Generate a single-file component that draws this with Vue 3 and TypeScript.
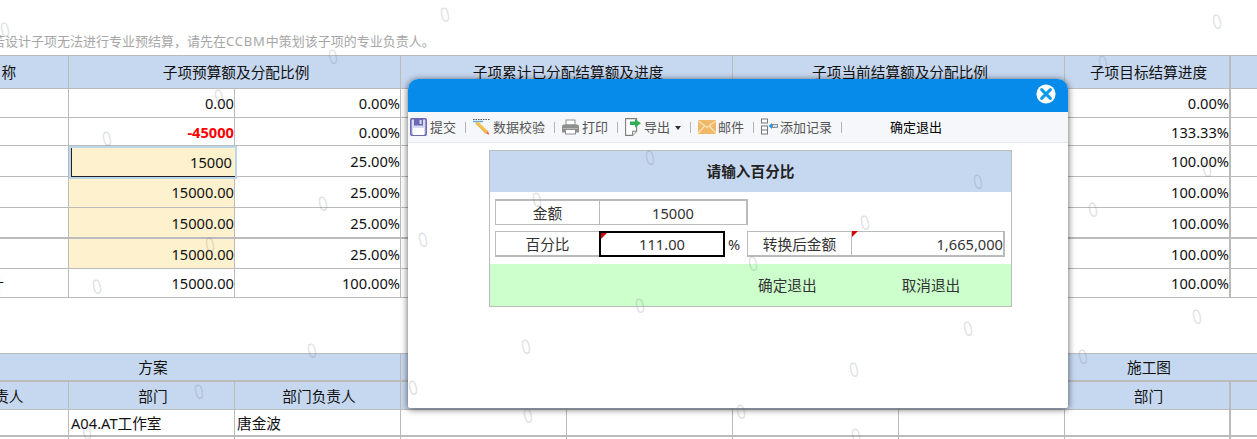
<script setup lang="ts">
interface TopRow { budget: string; pct: string; target: string; cls: string; budgetCls: string; name?: string }

const topRows: TopRow[] = [
  { budget: '0.00', pct: '0.00%', target: '0.00%', cls: 'r29', budgetCls: '' },
  { budget: '-45000', pct: '0.00%', target: '133.33%', cls: 'r28', budgetCls: 'neg' },
  { budget: '15000.00', pct: '25.00%', target: '100.00%', cls: 'r31', budgetCls: 'yellow focus' },
  { budget: '15000.00', pct: '25.00%', target: '100.00%', cls: 'r31', budgetCls: 'yellow' },
  { budget: '15000.00', pct: '25.00%', target: '100.00%', cls: 'r31 thick', budgetCls: 'yellow' },
  { budget: '15000.00', pct: '25.00%', target: '100.00%', cls: 'r30', budgetCls: 'yellow' },
  { budget: '15000.00', pct: '100.00%', target: '100.00%', cls: 'r29', budgetCls: '', name: '合计' }
]

const marks: [number, number][] = [
  [5, 30], [445, 15], [1217, 22], [333, 57], [1103, 63], [219, 97], [107, 139], [650, 158],
  [1207, 170], [978, 182], [537, 200], [323, 204], [1093, 210], [865, 223], [423, 240], [210, 245],
  [753, 264], [97, 287], [640, 306], [1197, 317], [968, 329], [526, 347], [312, 351], [1083, 357],
  [854, 370], [413, 388], [199, 392], [741, 412], [528, 416], [87, 433], [856, 436]
]
</script>

<template>
  <div class="page">
    <p class="note">若设计子项无法进行专业预结算，请先在<span class="latin">CCBM</span>中策划该子项的专业负责人。</p>

    <table class="grid">
      <colgroup>
        <col v-for="n in 9" :key="n" />
      </colgroup>
      <thead>
        <tr class="head r34">
          <th class="first shift">名称</th>
          <th colspan="2">子项预算额及分配比例</th>
          <th colspan="2">子项累计已分配结算额及进度</th>
          <th colspan="2">子项当前结算额及分配比例</th>
          <th class="bar">子项目标结算进度</th>
          <th class="open"></th>
        </tr>
      </thead>
      <tbody>
        <tr v-for="(row, i) in topRows" :key="i" :class="row.cls">
          <td class="first total">{{ row.name }}</td>
          <td class="num" :class="row.budgetCls">
            <div v-if="i === 2" class="active">15000</div>
            <template v-else>{{ row.budget }}</template>
          </td>
          <td class="num">{{ row.pct }}</td>
          <td></td><td></td><td></td><td></td>
          <td class="num bar">{{ row.target }}</td>
          <td class="open"></td>
        </tr>
      </tbody>
    </table>

    <table class="grid second">
      <colgroup>
        <col v-for="n in 9" :key="n" />
      </colgroup>
      <thead>
        <tr class="head r29 thick">
          <th colspan="3" class="first">方案</th>
          <th colspan="3"></th>
          <th colspan="3">施工图</th>
        </tr>
        <tr class="head r28">
          <th class="first shift">负责人</th>
          <th>部门</th>
          <th>部门负责人</th>
          <th></th><th></th><th></th><th></th>
          <th class="bar">部门</th>
          <th class="open"></th>
        </tr>
      </thead>
      <tbody>
        <tr class="r27 thick">
          <td class="first"></td>
          <td class="txt">A04.AT工作室</td>
          <td class="txt">唐金波</td>
          <td></td><td></td><td></td><td></td><td class="bar"></td>
          <td class="open"></td>
        </tr>
        <tr class="r28">
          <td class="first"></td>
          <td></td><td></td><td></td><td></td><td></td><td></td><td class="bar"></td>
          <td class="open"></td>
        </tr>
      </tbody>
    </table>

    <section class="dialog">
      <header class="dialog-bar">
        <svg class="close" viewBox="0 0 20 20" aria-label="关闭">
          <circle cx="10" cy="10" r="9.6" fill="#fff" />
          <path d="M5.6 5.6 14.4 14.4M14.4 5.6 5.6 14.4" stroke="#0e9be8" stroke-width="3" stroke-linecap="round" />
        </svg>
      </header>

      <nav class="toolbar">
        <svg class="ico" viewBox="0 0 17 18">
          <rect x="0.8" y="0.8" width="15.4" height="16.4" rx="1" fill="#d9d9ee" stroke="#6b69b3" stroke-width="1.6" />
          <rect x="4" y="1" width="9" height="6.5" fill="#6b69b3" />
          <rect x="9.6" y="2" width="2" height="4" fill="#d9d9ee" />
          <rect x="3" y="10" width="11" height="7" fill="#fff" />
        </svg>
        <span class="tool">提交</span><i class="sep"></i>

        <svg class="ico" viewBox="0 0 17 18">
          <path d="M0 1.5h17" stroke="#555" stroke-width="1" stroke-dasharray="1.5 1" />
          <path d="M0 3.5h10" stroke="#5aa7e6" stroke-width="1.4" />
          <path d="M2.5 5 5 3.6 15 13l-2.4 2.2z" fill="#f2c14e" />
          <path d="M2.5 5 12.6 15.2" stroke="#d89a2c" stroke-width="0.8" />
          <path d="M12.6 15.2 15 13l1.4 4z" fill="#ef6a55" />
        </svg>
        <span class="tool">数据校验</span><i class="sep"></i>

        <svg class="ico" viewBox="0 0 17 18">
          <rect x="4" y="2" width="9" height="5" fill="#fff" stroke="#8e8e8e" />
          <path d="M2 6.5h13a2 2 0 0 1 2 2v6H0v-6a2 2 0 0 1 2-2z" fill="#8e8e8e" />
          <rect x="3.5" y="11.5" width="10" height="4.5" fill="#fff" stroke="#8e8e8e" />
          <rect x="1" y="10" width="15" height="1" fill="#b8b8b8" />
        </svg>
        <span class="tool">打印</span><i class="sep"></i>

        <svg class="ico doc" viewBox="0 0 16 18">
          <path d="M.6.6h11v12.6l-4 4.2H.6z" fill="#fff" stroke="#7e7e7e" stroke-width="1.1" />
          <path d="M11.6 13.2h-4v4.2" fill="#eee" stroke="#7e7e7e" stroke-width="1" />
          <path d="M5 3.6h5V1l6 4.3-6 4.3V7H5z" fill="#2fae52" />
        </svg>
        <span class="tool">导出</span>
        <i class="caret"></i><i class="sep"></i>

        <svg class="ico mail" viewBox="0 0 18 14">
          <rect width="18" height="14" fill="#f0b968" />
          <path d="M0 .8 9 7.6 18 .8M0 13.4 6.6 6M18 13.4 11.4 6" fill="none" stroke="#fbe3bd" stroke-width="1.2" />
        </svg>
        <span class="tool tight">邮件</span><i class="sep"></i>

        <svg class="ico" viewBox="0 0 17 18">
          <rect x="0.5" y="1" width="6" height="4" fill="#fff" stroke="#777" />
          <rect x="0.5" y="8" width="6" height="8" fill="#fff" stroke="#777" />
          <path d="M0.5 12h6" stroke="#777" />
          <rect x="11.5" y="6.5" width="5" height="3" fill="#cfe3f4" stroke="#777" stroke-width="0.8" />
          <path d="M7.5 8 11 5v6z" fill="#2b9ae0" />
        </svg>
        <span class="tool tight">添加记录</span><i class="sep"></i>

        <span class="tool exit">确定退出</span>
      </nav>

      <div class="form">
        <h2 class="form-title">请输入百分比</h2>
        <div class="form-body">
          <div class="cell label top">金额</div>
          <div class="cell value top wide">15000</div>
          <div class="cell label bottom c1">百分比</div>
          <div class="cell input c2">111.00<b class="flag inside"></b></div>
          <div class="unit c3">%</div>
          <div class="cell label bottom c4">转换后金额</div>
          <div class="cell result c5">1,665,000<b class="flag outside"></b></div>
        </div>
        <div class="form-foot">
          <span>确定退出</span>
          <span>取消退出</span>
        </div>
      </div>
    </section>

    <div class="marks">
      <span
        v-for="(m, i) in marks"
        :key="i"
        class="mark"
        :style="{ left: m[0] - 6 + 'px', top: m[1] - 12 + 'px' }"
      >0</span>
    </div>
  </div>
</template>

<style>
html, body { margin: 0; overflow: hidden; background: #fff; }
</style>

<style scoped>
.page {
  position: relative;
  width: 1257px;
  height: 439px;
  overflow: hidden;
  background: #fff;
  color: #111;
  font: 14.67px "Noto Sans", "Noto Sans CJK SC", sans-serif;
}
.note {
  margin: 0 0 0 -8px;
  height: 55px;
  box-sizing: border-box;
  padding-top: 32px;
  font-size: 13px;
  line-height: 18px;
  color: #a6a6a6;
  white-space: nowrap;
}
.latin { letter-spacing: .8px; }
.grid {
  margin-left: -97px;
  border-collapse: separate;
  border-spacing: 0;
  table-layout: fixed;
  width: 1494px;
}
.grid col { width: 166px; }
.second { margin-top: 55px; }
.grid th, .grid td {
  box-sizing: border-box;
  padding: 0;
  border-right: 1px solid #bbb;
  border-bottom: 1px solid #bbb;
  font-weight: 400;
  white-space: nowrap;
  overflow: hidden;
}
.head th { background: #c6d8f0; text-align: center; padding-left: 3px; }
thead tr:first-child th { border-top: 1px solid #bbb; }
.r27 { height: 27px; }
.r28 { height: 28px; }
.r29 { height: 29px; }
.r30 { height: 30px; }
.r31 { height: 31px; }
.r34 { height: 34px; }
.r27 > *, .r28 > *, .r29 > *, .r30 > *, .r31 > *, .r34 > * { line-height: 20px; }
.grid .thick > * { border-bottom-width: 2px; }
.grid .bar { border-right-width: 2px; }
.grid .open { border-right: 0; }
.grid .shift { padding-left: 32px; }
.grid .total { text-align: right; padding-right: 64px; }
.num { text-align: right; }
.grid .neg { color: #f00; font-weight: 700; }
.yellow { background: #fef1cd; }
.grid .txt { padding-left: 2px; }
.grid .focus { position: relative; overflow: visible; }
.active {
  position: absolute;
  left: 0;
  top: 0;
  z-index: 1;
  box-sizing: border-box;
  width: 168px;
  height: 33px;
  padding-right: 3px;
  line-height: 29px;
  background: #fef1cd;
  border: 2px solid #b9d8ee;
  box-shadow: inset 1px -1px 0 #222;
}

.dialog {
  position: absolute;
  z-index: 2;
  left: 408px;
  top: 79px;
  width: 660px;
  height: 329px;
  background: #fff;
  border-radius: 10px 10px 2px 2px;
  box-shadow: 0 1px 7px rgba(0, 0, 0, .65);
}
.dialog-bar {
  display: flex;
  justify-content: flex-end;
  align-items: center;
  height: 33px;
  padding-right: 12px;
  box-sizing: border-box;
  background: #068beb;
  border-radius: 10px 10px 0 0;
}
.close { width: 20px; height: 20px; margin-top: -4px; }
.toolbar {
  display: flex;
  align-items: center;
  box-sizing: border-box;
  height: 31px;
  padding-left: 2px;
  background: #f5f7fa;
  border-bottom: 1px solid #e6e8ec;
  font-size: 13px;
  color: #555;
}
.ico { flex: none; width: 17px; height: 18px; }
.doc { width: 16px; }
.mail { width: 18px; height: 14px; }
.tool { margin-left: 3px; white-space: nowrap; line-height: 18px; }
.tight { margin-left: 2px; }
.exit { margin-left: 41px; color: #000; }
.sep {
  flex: none;
  width: 1px;
  height: 11px;
  margin: 0 7px 0 9px;
  background: #b5b5b5;
}
.caret {
  flex: none;
  width: 0;
  height: 0;
  margin: 2px 0 0 5px;
  border: 3.5px solid transparent;
  border-top: 4px solid #333;
  border-bottom: 0;
}

.form {
  box-sizing: border-box;
  width: 523px;
  margin: 7px 0 0 81px;
  border: 1px solid #bbb;
}
.form-title {
  margin: 0;
  height: 41px;
  font-size: 14.67px;
  font-weight: 700;
  line-height: 41px;
  text-align: center;
  background: #c6d8f0;
  color: #222;
}
.form-body {
  display: grid;
  grid-template-columns: 105px 125px 23px 104px 153px;
  grid-template-rows: 26px 26px;
  row-gap: 6px;
  box-sizing: border-box;
  height: 72px;
  padding: 7px 0 0 5px;
  color: #333;
}
.cell {
  position: relative;
  box-sizing: border-box;
  border: 1px solid #bbb;
  margin-left: -1px;
  line-height: 24px;
  text-align: center;
}
.cell:first-child { margin-left: 0; }
.c1 { grid-area: 2 / 1; margin-left: 0; }
.c2 { grid-area: 2 / 2; }
.c3 { grid-area: 2 / 3; }
.c4 { grid-area: 2 / 4; }
.c5 { grid-area: 2 / 5; }
.top { border-top-width: 2px; }
.bottom { border-bottom-width: 2px; }
.wide { grid-column: 2 / 4; border-right-width: 2px; }
.input {
  border: 2px solid #000;
  line-height: 22px;
}
.unit { line-height: 26px; padding-left: 3px; }
.result {
  border-right-width: 2px;
  border-bottom-width: 2px;
  text-align: right;
}
.flag {
  position: absolute;
  width: 0;
  height: 0;
  border-top: 6px solid #d30000;
  border-right: 6px solid transparent;
}
.inside { left: 0; top: 0; }
.outside { left: 0; top: -1px; }
.form-foot {
  display: flex;
  gap: 85px;
  box-sizing: border-box;
  height: 42px;
  padding-left: 268px;
  background: #ccffcc;
  line-height: 42px;
  color: #333;
}

.marks { position: absolute; z-index: 3; inset: 0; pointer-events: none; }
.mark {
  position: absolute;
  width: 12px;
  text-align: center;
  font: 21px/24px "Liberation Sans", sans-serif;
  color: rgba(110, 115, 130, .22);
  transform: rotate(-12deg) scaleX(.78);
}
</style>
